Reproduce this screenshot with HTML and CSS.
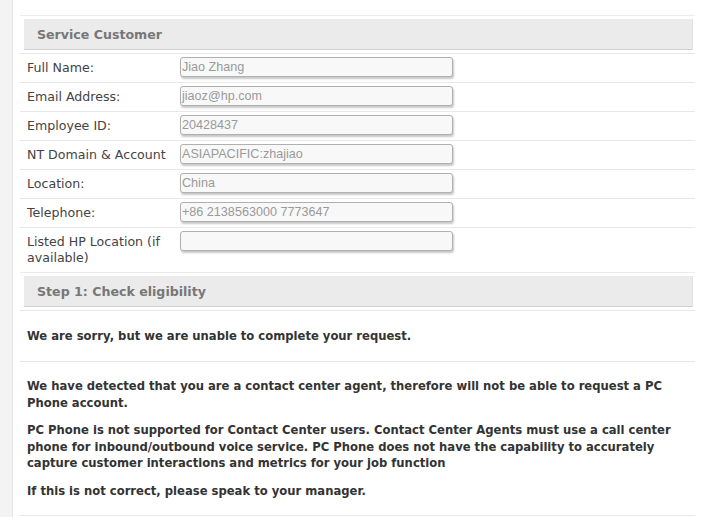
FILE: index.html
```html
<!DOCTYPE html>
<html>
<head>
<meta charset="utf-8">
<link rel="stylesheet" href="styles.css">
</head>
<body>
<div class="page">
  <div class="side"></div>
  <div class="content">
    <div class="section">
      <div class="band">Service Customer</div>
      <div class="row"><div class="label">Full Name:</div><div class="field">Jiao Zhang</div></div>
      <div class="row"><div class="label">Email Address:</div><div class="field">jiaoz@hp.com</div></div>
      <div class="row"><div class="label">Employee ID:</div><div class="field">20428437</div></div>
      <div class="row"><div class="label">NT Domain &amp; Account</div><div class="field">ASIAPACIFIC:zhajiao</div></div>
      <div class="row"><div class="label">Location:</div><div class="field">China</div></div>
      <div class="row"><div class="label">Telephone:</div><div class="field">+86 2138563000 7773647</div></div>
      <div class="row tall"><div class="label">Listed HP Location (if available)</div><div class="field"></div></div>
    </div>
    <div class="section">
      <div class="band">Step 1: Check eligibility</div>
      <div class="msg first"><p>We are sorry, but we are unable to complete your request.</p></div>
      <div class="msg second">
        <p>We have detected that you are a contact center agent, therefore will not be able to request a PC Phone account.</p>
        <p>PC Phone is not supported for Contact Center users. Contact Center Agents must use a call center phone for inbound/outbound voice service. PC Phone does not have the capability to accurately capture customer interactions and metrics for your job function</p>
        <p>If this is not correct, please speak to your manager.</p>
      </div>
    </div>
  </div>
</div>
</body>
</html>
```
FILE: styles.css
```css
html, body {
  margin: 0;
  padding: 0;
  background: #fff;
}
body {
  font-family: "DejaVu Sans", Verdana, sans-serif;
  color: #333;
}
.page {
  display: flex;
  min-height: 517px;
}
.side {
  width: 12px;
  background: #f3f3f3;
  border-right: 1px solid #e6e6e6;
  flex: none;
}
.content {
  width: 675px;
  margin-left: 7px;
  padding-top: 15px;
}
.section {
  border-top: 1px solid #ececec;
}
.band {
  margin: 3px 2px 3px 4px;
  height: 31px;
  background: #ebebeb;
  border-bottom: 1px solid #cfcfcf;
  border-right: 1px solid #e2e2e2;
  box-sizing: border-box;
  padding-left: 13px;
  padding-top: 1px;
  line-height: 30px;
  font-weight: bold;
  font-size: 12.6px;
  color: #777;
}
.row {
  display: grid;
  grid-template-columns: 153px 273px;
  border-top: 1px solid #e8e8e8;
  padding: 3px 0 0 7px;
  height: 29px;
  box-sizing: border-box;
  align-items: start;
}
.row.tall {
  height: 45px;
}
.label {
  font-size: 12.6px;
  color: #444;
  line-height: 16px;
  margin-top: 3px;
}
.row.tall .label {
  padding-right: 16px;
}
.field {
  height: 20px;
  box-sizing: border-box;
  border: 1px solid #b0b0b0;
  border-radius: 3px;
  background: #f8f8f8;
  box-shadow: 1px 2px 2px rgba(0, 0, 0, 0.22);
  font-family: "Liberation Sans", Arial, sans-serif;
  font-size: 12.6px;
  color: #9a9a9a;
  line-height: 18px;
  padding-left: 1px;
}
.msg {
  border-top: 1px solid #e8e8e8;
  padding: 0 20px 0 7px;
  font-size: 11.6px;
  font-weight: bold;
  color: #333;
  line-height: 16.5px;
}
.msg p {
  margin: 0;
}
.msg.first {
  height: 51px;
  box-sizing: border-box;
  padding-top: 17px;
}
.msg.second {
  padding-top: 16px;
  padding-bottom: 16px;
  border-bottom: 1px solid #e8e8e8;
}
.msg.second p + p {
  margin-top: 11px;
}
```
